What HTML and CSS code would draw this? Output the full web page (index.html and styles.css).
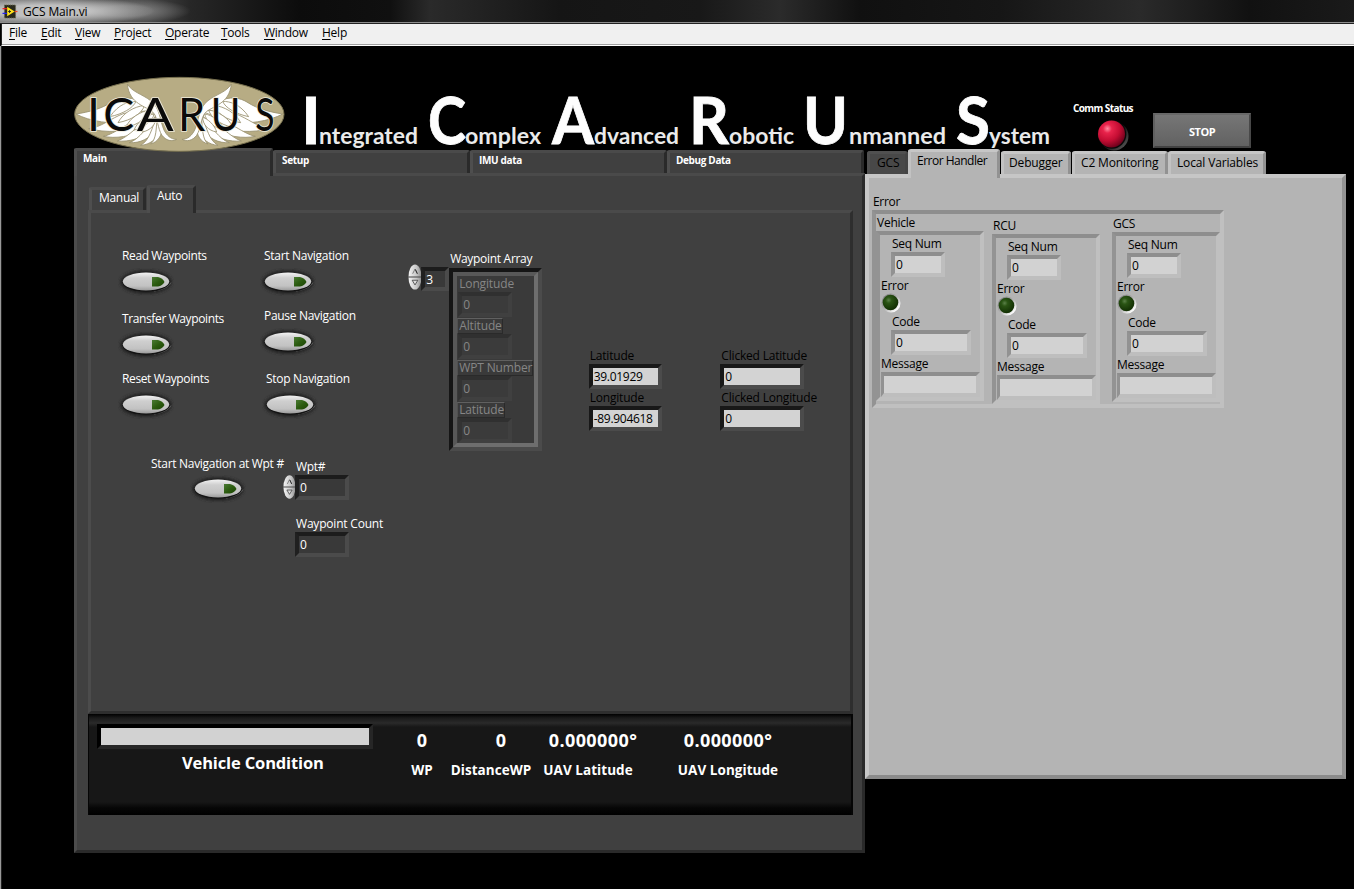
FILE: index.html
```html
<!DOCTYPE html>
<html lang="en">
<head>
<meta charset="utf-8">
<title>GCS Main.vi</title>
<link rel="stylesheet" href="styles.css">
</head>
<body>
<svg class="defs" width="0" height="0" aria-hidden="true">
  <defs>
    <linearGradient id="pill" x1="0" y1="0" x2="0" y2="1"><stop offset="0" stop-color="#f2f2f2"/><stop offset=".3" stop-color="#cfcfcf"/><stop offset=".75" stop-color="#c2c2c2"/><stop offset="1" stop-color="#9c9c9c"/></linearGradient>
    <linearGradient id="lamp" x1="0" y1="0" x2="1" y2="1"><stop offset="0" stop-color="#4a7a33"/><stop offset=".5" stop-color="#2c5c10"/><stop offset="1" stop-color="#1c4404"/></linearGradient>
    <linearGradient id="spin" x1="0" y1="0" x2="1" y2="0"><stop offset="0" stop-color="#f4f4f4"/><stop offset=".6" stop-color="#c8c8c8"/><stop offset="1" stop-color="#8e8e8e"/></linearGradient>
    <radialGradient id="green" cx=".38" cy=".35" r=".65"><stop offset="0" stop-color="#5b8048"/><stop offset=".3" stop-color="#2a5414"/><stop offset="1" stop-color="#122f03"/></radialGradient>
    <radialGradient id="red" cx=".35" cy=".3" r=".75"><stop offset="0" stop-color="#ff8ba0"/><stop offset=".22" stop-color="#e8234b"/><stop offset=".6" stop-color="#c40d33"/><stop offset="1" stop-color="#69001a"/></radialGradient>
    <linearGradient id="ring" x1="0" y1="0" x2="1" y2="1"><stop offset=".1" stop-color="#7c7c7c"/><stop offset=".5" stop-color="#b4b4b4"/><stop offset=".85" stop-color="#ffffff"/></linearGradient>
    <linearGradient id="redring" x1="0" y1="0" x2="1" y2="1"><stop offset=".4" stop-color="#000"/><stop offset=".9" stop-color="#555"/></linearGradient>
    <filter id="soft" x="-20%" y="-40%" width="140%" height="180%"><feGaussianBlur stdDeviation="1.5"/></filter>
    <symbol id="toggle" viewBox="0 0 56 28">
      <ellipse cx="28" cy="14" rx="26" ry="12" fill="#242424" filter="url(#soft)"/>
      <path d="M36 23 C44 22 51 19 53 14.500" fill="none" stroke="#5a5a5a" stroke-width="1"/>
      <ellipse cx="28" cy="14.500" rx="23.500" ry="9.300" fill="#141414"/>
      <ellipse cx="28" cy="13.500" rx="23.200" ry="8.900" fill="url(#pill)"/>
      <path d="M34 9 H40 C43 9.500 45.500 11.500 46.500 14 C45 16.500 43 18 40 18.500 H34 Z" fill="url(#lamp)"/>
    </symbol>
    <symbol id="stepper" viewBox="0 0 15 28">
      <ellipse cx="7.500" cy="14" rx="7" ry="13.500" fill="url(#spin)"/>
      <path d="M0 14 H15" stroke="#505050" stroke-width="1.200"/>
      <path d="M5 10.500 L7.500 5.500 L10 10.500" fill="none" stroke="#777"/><path d="M8 6 L10 10.500" stroke="#222"/>
      <path d="M4.500 17.500 H10.500 L7.500 22.500 Z" fill="#ddd" stroke="#333" stroke-width=".8"/>
    </symbol>
    <symbol id="led" viewBox="0 0 20 20">
      <circle cx="10" cy="10" r="9.500" fill="url(#ring)"/>
      <circle cx="9.500" cy="9.500" r="7.800" fill="url(#green)"/>
    </symbol>
    <g id="wing" fill="#fff" stroke="#9a9270" stroke-width="2.600">
      <path d="M24 132 C64 126 100 116 128 98 C152 82 184 78 214 94 L268 126 L196 158 C130 164 64 154 24 132Z"/>
      <path d="M62 176 C100 172 126 146 168 130 L262 120 L240 162 C180 190 110 188 62 176Z"/>
      <path d="M106 199 C146 190 168 160 262 126 L240 174 C190 202 140 206 106 199Z"/>
      <path d="M148 213 C184 200 210 164 264 130 L252 180 C220 206 184 216 148 213Z"/>
      <path d="M184 218 C216 206 238 170 266 134 L264 178 C246 206 216 220 184 218Z"/>
      <path d="M218 226 C246 210 250 176 268 136 L276 182 C266 208 246 224 218 226Z"/>
      <path d="M248 222 C266 206 264 176 268 138 L282 174 C282 196 270 216 248 222Z"/>
      <path d="M126 140 C152 102 182 94 204 94 C196 114 164 132 126 140Z"/>
      <path d="M150 158 C166 128 198 110 230 106 C222 130 192 150 150 158Z"/>
      <path d="M174 172 C184 144 218 124 246 120 C240 142 212 164 174 172Z"/>
      <path d="M198 180 C208 156 236 134 258 132 C254 154 232 174 198 180Z"/>
      <path d="M222 186 C228 164 250 146 264 142 C264 162 248 182 222 186Z"/>
      <path d="M178 42 C192 66 222 72 248 92 C276 112 276 154 288 180 C296 196 308 208 326 208 C312 216 294 212 282 196 C268 174 270 144 256 128 C236 108 184 104 178 42Z"/>
    </g>
  </defs>
</svg>

<header class="titlebar">
  <svg class="app-icon" viewBox="0 0 16 16"><rect x="2" y="1" width="12" height="14" fill="#29291c" stroke="#77775f" stroke-dasharray="1 1"/><path d="M0 5 H5" stroke="#e22" stroke-width="1.300"/><path d="M0 10 H5" stroke="#22e" stroke-width="1.300"/><path d="M13 8 H16" stroke="#e42" stroke-width="1.300"/><path d="M5 3 L13 8 L5 13 Z" fill="#ffe21a"/><path d="M6 8 H9 M7.500 6.500 V9.500" stroke="#222"/></svg>
  <span class="win-title">GCS Main.vi</span>
</header>
<nav class="menubar">
  <span class="m-file"><u>F</u>ile</span><span class="m-edit"><u>E</u>dit</span><span class="m-view"><u>V</u>iew</span><span class="m-project"><u>P</u>roject</span><span class="m-operate"><u>O</u>perate</span><span class="m-tools"><u>T</u>ools</span><span class="m-window"><u>W</u>indow</span><span class="m-help"><u>H</u>elp</span>
</nav>

<main class="front">
  <section class="banner">
    <svg class="logo" viewBox="0 0 672 270">
      <ellipse cx="334" cy="133" rx="314" ry="111" fill="#b7ac84" stroke="#77704f" stroke-width="3"/>
      <use href="#wing"/><use href="#wing" transform="translate(668 0) scale(-1 1)"/>
      <g class="logo-text">
        <text x="57" y="184">I</text>
        <text x="106" y="184" textLength="93" lengthAdjust="spacingAndGlyphs">C</text>
        <text x="206" y="184" textLength="111" lengthAdjust="spacingAndGlyphs">A</text>
        <text x="330" y="184" textLength="82" lengthAdjust="spacingAndGlyphs">R</text>
        <text x="428" y="184" textLength="89" lengthAdjust="spacingAndGlyphs">U</text>
        <text x="562" y="184" textLength="58" lengthAdjust="spacingAndGlyphs">S</text>
      </g>
    </svg>
    <svg class="name" viewBox="300 80 760 74">
      <g class="name-big">
        <text x="301" y="144" textLength="20" lengthAdjust="spacingAndGlyphs">I</text>
        <text x="428" y="144" textLength="38" lengthAdjust="spacingAndGlyphs">C</text>
        <text x="552" y="144" textLength="42" lengthAdjust="spacingAndGlyphs">A</text>
        <text x="689" y="144" textLength="40" lengthAdjust="spacingAndGlyphs">R</text>
        <text x="803" y="144" textLength="45" lengthAdjust="spacingAndGlyphs">U</text>
        <text x="956" y="144" textLength="34" lengthAdjust="spacingAndGlyphs">S</text>
      </g>
      <g class="name-small">
        <text x="319" y="144" textLength="99" lengthAdjust="spacingAndGlyphs">ntegrated</text>
        <text x="465" y="144" textLength="76" lengthAdjust="spacingAndGlyphs">omplex</text>
        <text x="594" y="144" textLength="85" lengthAdjust="spacingAndGlyphs">dvanced</text>
        <text x="729" y="144" textLength="65" lengthAdjust="spacingAndGlyphs">obotic</text>
        <text x="849" y="144" textLength="97" lengthAdjust="spacingAndGlyphs">nmanned</text>
        <text x="989" y="144" textLength="61" lengthAdjust="spacingAndGlyphs">ystem</text>
      </g>
    </svg>
    <div class="comm"><span>Comm Status</span>
      <svg viewBox="0 0 36 34"><circle cx="19" cy="18" r="14.500" fill="url(#redring)"/><circle cx="17" cy="16.500" r="14.300" fill="#0a0a0a"/><circle cx="16.500" cy="16" r="13.500" fill="url(#red)"/></svg>
    </div>
    <button class="stop">STOP</button>
  </section>

  <div class="columns">
    <section class="left">
      <div class="tabs"><div class="tab active">Main</div><div class="tab">Setup</div><div class="tab">IMU data</div><div class="tab">Debug Data</div></div>
      <div class="left-page">
        <div class="subtabs"><div class="tab sub">Manual</div><div class="tab sub active">Auto</div></div>
        <div class="auto">
          <div class="controls">
            <div class="toggles">
              <div class="tcol">
                <div class="tg"><span>Read Waypoints</span><svg><use href="#toggle"/></svg></div>
                <div class="tg"><span>Transfer Waypoints</span><svg><use href="#toggle"/></svg></div>
                <div class="tg"><span>Reset Waypoints</span><svg><use href="#toggle"/></svg></div>
              </div>
              <div class="tcol">
                <div class="tg"><span>Start Navigation</span><svg><use href="#toggle"/></svg></div>
                <div class="tg"><span>Pause Navigation</span><svg><use href="#toggle"/></svg></div>
                <div class="tg shifted"><span>Stop Navigation</span><svg><use href="#toggle"/></svg></div>
              </div>
            </div>
            <div class="wpt-row">
              <div class="tg at"><span>Start Navigation at Wpt #</span><svg><use href="#toggle"/></svg></div>
              <div class="wpt">
                <span>Wpt#</span>
                <div class="numeric"><svg class="step"><use href="#stepper"/></svg><div class="field dark w54">0</div></div>
                <span class="count">Waypoint Count</span>
                <div class="field dark w54">0</div>
              </div>
            </div>
          </div>
          <div class="array">
            <div class="index"><svg class="step"><use href="#stepper"/></svg><div class="field dark">3</div></div>
            <div class="array-main"><span>Waypoint Array</span>
              <div class="array-frame"><div class="array-cell">
                <b>Longitude</b><div class="field dim">0</div>
                <b class="boxed">Altitude</b><div class="field dim">0</div>
                <b class="boxed">WPT Number</b><div class="field dim">0</div>
                <b class="boxed">Latitude</b><div class="field dim">0</div>
              </div></div>
            </div>
          </div>
          <div class="coords">
            <span>Latitude</span><div class="field lit w72">39.01929</div>
            <span>Longitude</span><div class="field lit w72">-89.904618</div>
          </div>
          <div class="coords clicked">
            <span>Clicked Latitude</span><div class="field lit w84">0</div>
            <span>Clicked Longitude</span><div class="field lit w84">0</div>
          </div>
        </div>
        <div class="status">
          <div class="condition"><div class="bar"></div><span>Vehicle Condition</span></div>
          <div class="stat s1"><strong>0</strong><span>WP</span></div>
          <div class="stat s2"><strong>0</strong><span>DistanceWP</span></div>
          <div class="stat s3"><strong>0.000000°</strong><span>UAV Latitude</span></div>
          <div class="stat s4"><strong>0.000000°</strong><span>UAV Longitude</span></div>
        </div>
      </div>
    </section>

    <section class="right">
      <div class="rtabs"><div class="rtab off">GCS</div><div class="rtab active">Error Handler</div><div class="rtab t3">Debugger</div><div class="rtab t4">C2 Monitoring</div><div class="rtab t5">Local Variables</div></div>
      <div class="right-page">
        <span class="cluster-title">Error</span>
        <div class="cluster outer">
          <div class="unit u1"><span>Vehicle</span><div class="cluster inner"><i class="in">Seq Num</i><div class="field pale seq">0</div><i>Error</i><svg class="led"><use href="#led"/></svg><i class="in">Code</i><div class="field pale code">0</div><i>Message</i><div class="field pale msg"></div></div></div>
          <div class="unit u2"><span>RCU</span><div class="cluster inner"><i class="in">Seq Num</i><div class="field pale seq">0</div><i>Error</i><svg class="led"><use href="#led"/></svg><i class="in">Code</i><div class="field pale code">0</div><i>Message</i><div class="field pale msg"></div></div></div>
          <div class="unit u3"><span>GCS</span><div class="cluster inner"><i class="in">Seq Num</i><div class="field pale seq">0</div><i>Error</i><svg class="led"><use href="#led"/></svg><i class="in">Code</i><div class="field pale code">0</div><i>Message</i><div class="field pale msg"></div></div></div>
        </div>
      </div>
    </section>
  </div>
</main>
</body>
</html>
```
FILE: styles.css
```css
* { box-sizing: border-box; }
body {
  margin: 0; width: 1354px; height: 889px; overflow: hidden;
  display: flex; flex-direction: column;
  background: #000; color: #fff;
  font: 12px/16px "Open Sans", "Noto Sans", sans-serif;
  letter-spacing: -0.3px; white-space: nowrap;
}
svg { display: block; flex: none; overflow: visible; }
.defs { position: absolute; }
i, b { font-style: normal; font-weight: 400; }

/* window chrome */
.titlebar {
  flex: none; height: 24px; display: flex; align-items: flex-start; padding: 4px 0 0 2px;
  color: #000; border-bottom: 1px solid #222; box-shadow: inset 0 -1px #8c8c8c;
  background:
    radial-gradient(ellipse 110px 15px at 45px 11px, rgba(215,215,215,.8) 40%, rgba(190,190,190,0) 100%),
    radial-gradient(ellipse 66px 13px at 125px 11px, rgba(130,130,130,.75) 40%, rgba(100,100,100,0) 100%),
    linear-gradient(90deg, #6a6a6a 0, #444 150px, #272727 190px, #0c0c0c 300px, #101010 390px, #2a2a2a 430px, #151515 560px, #181818 700px, #2b2b2b 780px, #101010 860px, #161616 1000px, #2a2a2a 1140px, #111 1250px, #1a1a1a 100%);
}
.app-icon { width: 16px; height: 15px; }
.win-title { margin-left: 5px; letter-spacing: -.15px; }
.menubar {
  flex: none; height: 22px; display: flex; margin-left: 1px; border-left: 1px solid #222;
  background: #f0f0f0; color: #000; line-height: 18px; border-bottom: 1px solid #fff; box-shadow: inset 0 -1px #a0a0a0;
  letter-spacing: -.25px;
}
.menubar span { flex: none; }
.menubar u { text-underline-offset: 2px; }
.m-file { width: 32px; margin-left: 7px; }
.m-edit { width: 34px; }
.m-view { width: 39px; }
.m-project { width: 51px; }
.m-operate { width: 56px; }
.m-tools { width: 43px; }
.m-window { width: 58px; }
.front { flex: 1; border-left: 1px solid #999; box-shadow: inset 1px 0 #222; }

/* banner */
.banner { height: 102px; display: flex; align-items: flex-start; position: relative; z-index: 3; }
.logo { width: 224px; height: 90px; margin: 24px 0 0 67px; }
.logo-text text { font: 400 140px Lato, sans-serif; fill: #0a0a0a; stroke: #eeeadb; stroke-width: 5px; paint-order: stroke; letter-spacing: 0; }
.name { width: 760px; height: 74px; margin: 34px 0 0 8px; }
.name text { font-family: Lato, sans-serif; font-weight: 700; fill: #fdfdfd; letter-spacing: 0; }
.name-big text { font-size: 65px; stroke: #fdfdfd; stroke-width: .8px; }
.name-small text { font-size: 23px; fill: #eaeaea; }
.comm { width: 80px; margin: 54px 0 0 13px; font: 700 10px/16px "Open Sans", sans-serif; letter-spacing: -.6px; }
.comm svg { width: 36px; height: 34px; margin: 2px 0 0 22px; }
.stop {
  width: 98px; height: 35px; margin: 67px 0 0 0; padding: 1px 0 0; border: 2px solid; border-color: #686868 #484848 #424242 #606060;
  background: linear-gradient(#767676, #626262); color: #fff; font: 700 11px "Open Sans", sans-serif; letter-spacing: -.5px;
}

/* left notebook */
.columns { display: flex; align-items: flex-start; padding-left: 73px; }
.left { width: 791px; }
.tabs { height: 25px; display: flex; align-items: flex-end; position: relative; z-index: 1; }
.tab {
  width: 197px; height: 23px; padding: 0 0 0 6px; background: #404040;
  border-top: 3px solid #4a4a4a; border-left: 3px solid #4e4e4e; border-right: 3px solid #2a2a2a;
  border-radius: 2px 2px 0 0; font: 700 10px/15px "Open Sans", sans-serif; letter-spacing: -.35px;
}
.tab.active { width: 199px; height: 28px; margin-bottom: -3px; }
.left-page {
  height: 680px; padding: 11px 9px 0 11px; background: #404040;
  border: 3px solid; border-color: #4a4a4a #2a2a2a #2a2a2a #4c4c4c;
}
.subtabs { height: 23px; padding-left: 1px; display: flex; align-items: flex-end; position: relative; z-index: 1; }
.tab.sub { width: 57px; padding: 0 0 0 7px; font: 12px/15px "Open Sans", sans-serif; letter-spacing: -.3px; }
.tab.sub.active { width: 49px; height: 28px; margin-left: 1px; line-height: 16px; }
.auto {
  height: 504px; display: flex; border: 3px solid; border-color: #4a4a4a #2e2e2e #2e2e2e #4c4c4c;
  padding-left: 31px;
}
.controls { width: 286px; padding-top: 35px; }
.toggles { height: 208px; display: flex; }
.tcol { width: 142px; }
.tg { height: 60px; }
.tg span { display: block; }
.tg svg { width: 56px; height: 28px; margin: 4px 0 0 -4px; }
.tcol:first-child .tg span { letter-spacing: -.38px; }
.tcol:first-child .tg:first-child { height: 63px; }
.tcol:last-child .tg:nth-child(2) { height: 63px; }
.shifted { margin-left: 2px; }
.wpt-row { display: flex; }
.at { width: 132px; margin-left: 29px; }
.at svg { margin: 3px 0 0 39px; }
.wpt { padding-top: 3px; margin-left: 12px; }
.wpt > span { display: block; margin-left: 1px; }
.numeric { display: flex; margin-left: -12px; }
.step { width: 13px; height: 26px; }
.numeric .step { margin: -1px -1px 0 0; }
.wpt > .count { margin-top: 16px; letter-spacing: -.2px; }
.field { height: 25px; border: 4px solid; padding-left: 1px; line-height: 17px; letter-spacing: -.3px; }
.dark { background: #393939; border-color: #1c1c1c #4b4b4b #4b4b4b #202020; }
.w54 { width: 54px; }
.array { width: 182px; display: flex; padding: 37px 0 0 1px; }
.index { width: 41px; display: flex; padding-top: 17px; }
.index .step { width: 14px; height: 28px; margin: -4px -1px 0 0; }
.index .field { width: 28px; height: 24px; }
.array-main > span { display: block; margin-left: 1px; line-height: 18px; }
.array-frame { width: 93px; height: 183px; border: 4px solid; border-color: #151515 #4b4b4b #4b4b4b #151515; }
.array-cell { height: 175px; border: 4px solid; border-color: #585858 #6e6e6e #6e6e6e #585858; background: #3a3a3a; color: #868686; display: flex; flex-direction: column; align-items: flex-start; letter-spacing: -.15px; }
.array-cell b { height: 16px; line-height: 16px; padding: 0 2px; }
.array-cell .boxed { margin-top: 1px; border: 1px solid; border-color: #606060 #2a2a2a #2a2a2a #505050; line-height: 14px; padding: 0 0 0 1px; }
.dim { width: 54px; margin-left: 1px; background: #3b3b3b; border-color: #303030 #404040 #404040 #333; }
.coords { width: 131px; padding: 134px 0 0 0; color: #000; letter-spacing: -.2px; }
.coords span { display: block; margin-left: 1px; height: 17px; line-height: 18px; }
.clicked { padding-left: 1px; }
.lit { background: #d3d3d3; border-color: #181818 #4b4b4b #4b4b4b #181818; }
.w72 { width: 73px; }
.w84 { width: 84px; }

/* status strip */
.status {
  height: 101px; display: flex; padding: 10px 0 0 8px; font-family: "Open Sans", sans-serif; font-weight: 700;
  background: linear-gradient(#000 0, #1a1a1a 4px, #2a2a2a 9px, #171717 13px, #171717 88px, #060606 94px, #000 100%);
  border: solid #050505; border-width: 0 2px 0 1px;
}
.condition { width: 308px; }
.bar { width: 276px; height: 25px; background: #d2d2d2; border: 4px solid; border-color: #000 #262626 #262626 #000; }
.condition span { display: block; margin: 4px 0 0 85px; font-size: 16.5px; line-height: 20px; letter-spacing: -.15px; }
.stat { display: flex; flex-direction: column; align-items: center; padding-top: 6px; font-size: 13.5px; letter-spacing: .05px; }
.stat strong { font-size: 18px; line-height: 20px; margin-bottom: 12px; font-weight: 700; letter-spacing: .4px; }
.s1 { width: 34px; }
.s2 { width: 84px; margin-left: 10px; }
.s2 strong { margin-left: 20px; }
.s3 { width: 92px; margin-left: 9px; }
.s3 strong { margin-left: 10px; }
.s4 { width: 104px; margin-left: 42px; }

/* right notebook */
.right { width: 481px; color: #000; }
.rtabs { height: 26px; display: flex; align-items: flex-end; padding-left: 2px; position: relative; z-index: 1; }
.rtab {
  height: 23px; padding: 0 0 0 5px; line-height: 17px; background: #b4b4b4; letter-spacing: -.15px;
  border-top: 3px solid #c6c6c6; border-left: 3px solid #c2c2c2; border-right: 3px solid #929292; border-radius: 3px 3px 0 0;
}
.rtab.off { width: 41px; background: #484848; border-color: #505050 #444 #444 #505050; padding-left: 7px; }
.rtab.active { width: 92px; height: 29px; margin-bottom: -4px; padding-left: 6px; letter-spacing: -.5px; }
.t3 { width: 70px; margin-left: 1px; }
.t4 { width: 96px; margin-left: 1px; }
.rtab.t4 { padding-left: 6px; }
.t5 { width: 98px; margin-left: 0; }
.rtab.t5 { padding-left: 6px; }
.right-page {
  height: 605px; background: #b4b4b4; border: 4px solid; border-color: #c6c6c6 #949494 #8b8b8b #c8c8c8; padding: 16px 0 0 3px;
}
.cluster-title { display: block; margin-left: 1px; }
.cluster { border: 4px solid; border-color: #8e8e8e #c0c0c0 #c0c0c0 #939393; }
.outer { width: 352px; height: 198px; display: flex; align-items: flex-start; letter-spacing: -.25px; }
.unit { width: 108px; }
.unit > span { display: block; margin-left: 1px; }
.u1 { margin-top: 1px; }
.u2 { margin: 4px 0 0 8px; }
.u3 { margin: 2px 0 0 12px; }
.inner { height: 170px; padding-top: 1px; }
.inner i { display: block; margin-left: 1px; }
.inner .in { margin-left: 12px; }
.pale { background: #d2d2d2; border-color: #8e8e8e #bebebe #bebebe #929292; }
.seq { width: 54px; margin: 0 0 1px 11px; }
.code { width: 80px; margin: 0 0 1px 11px; }
.msg { width: 99px; border-left-width: 3px; margin-left: 1px; }
.led { width: 20px; height: 20px; margin: -1px 0 1px 1px; }
```
